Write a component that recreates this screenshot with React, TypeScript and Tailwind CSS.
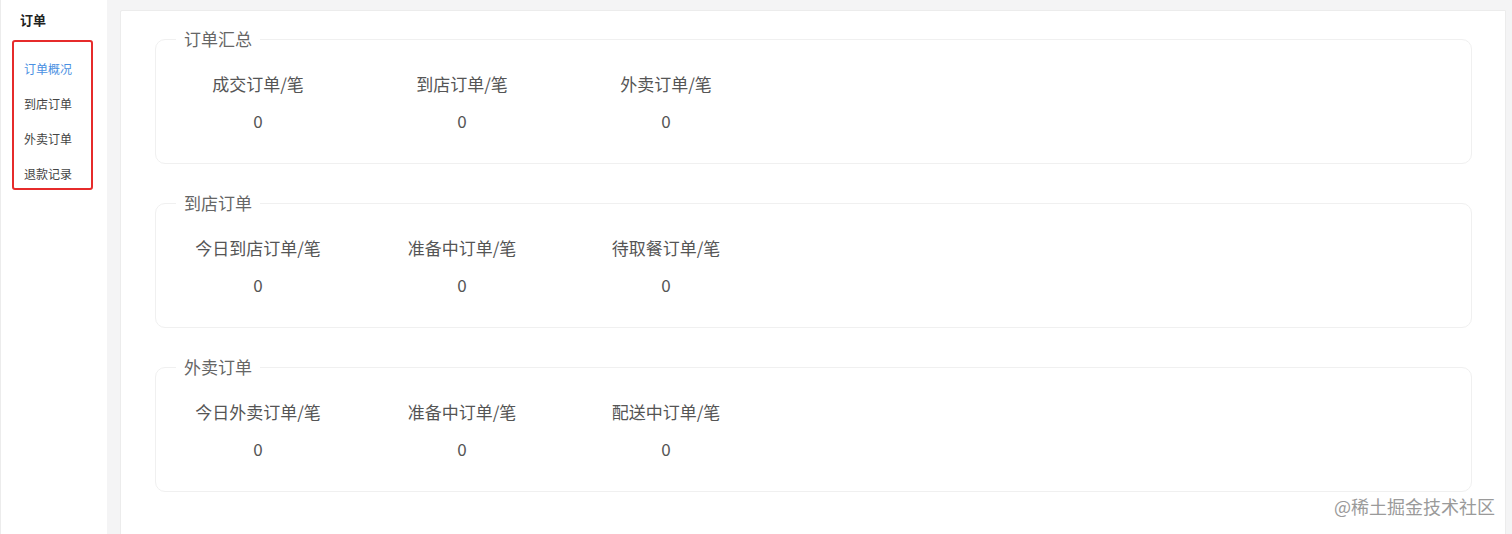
import React from "react";

const sections = [
  { title: "订单汇总", items: ["成交订单/笔", "到店订单/笔", "外卖订单/笔"] },
  { title: "到店订单", items: ["今日到店订单/笔", "准备中订单/笔", "待取餐订单/笔"] },
  { title: "外卖订单", items: ["今日外卖订单/笔", "准备中订单/笔", "配送中订单/笔"] },
];

const menu = ["订单概况", "到店订单", "外卖订单", "退款记录"];

export default function App() {
  return (
    <div
      className="relative flex h-[534px] w-full overflow-hidden bg-[#f4f4f5]"
      style={{ fontFamily: '"Microsoft YaHei", "Noto Sans CJK SC", "Liberation Sans", sans-serif' }}
    >
      {/* sidebar */}
      <aside className="w-[107px] shrink-0 border-l border-[#ececec] bg-white">
        <div className="pl-[19px] pt-[11px] text-[13px] font-bold leading-[18px] text-[#222]">订单</div>
        <ul className="ml-[11px] mt-[11px] flex w-[81px] flex-col gap-[15px] rounded-[3px] border-2 border-[#e62b2b] pb-[4px] pl-[10px] pt-[17px] text-[12px] leading-[20px]">
          {menu.map((m, i) => (
            <li key={m} className={i === 0 ? "text-[#4a90e2]" : "text-[#444]"}>
              {m}
            </li>
          ))}
        </ul>
      </aside>

      {/* main card */}
      <main className="ml-[13px] mr-[6px] mt-[10px] h-[600px] flex-1 shrink-0 rounded-tl-[2px] border border-[#ececec] bg-white pl-[34px] pr-[33px] pt-[16px]">
        {sections.map((s) => (
          <fieldset key={s.title} className="mb-[27px] rounded-[10px] border border-[#f0f0f0] px-0 pb-[30px]">
            <legend className="ml-[20px] px-[8px] text-[17px] leading-[24px] text-[#666]">{s.title}</legend>
            <div className="mt-[21px] flex">
              {s.items.map((it) => (
                <div key={it} className="flex w-[204px] flex-col items-center gap-[13px] text-[17px] leading-[24px] text-[#555]">
                  <span>{it}</span>
                  <span>0</span>
                </div>
              ))}
            </div>
          </fieldset>
        ))}
      </main>

      <div className="absolute bottom-[16px] right-[17px] text-[18px] leading-[24px] text-[#9a9a9a]">@稀土掘金技术社区</div>
    </div>
  );
}
